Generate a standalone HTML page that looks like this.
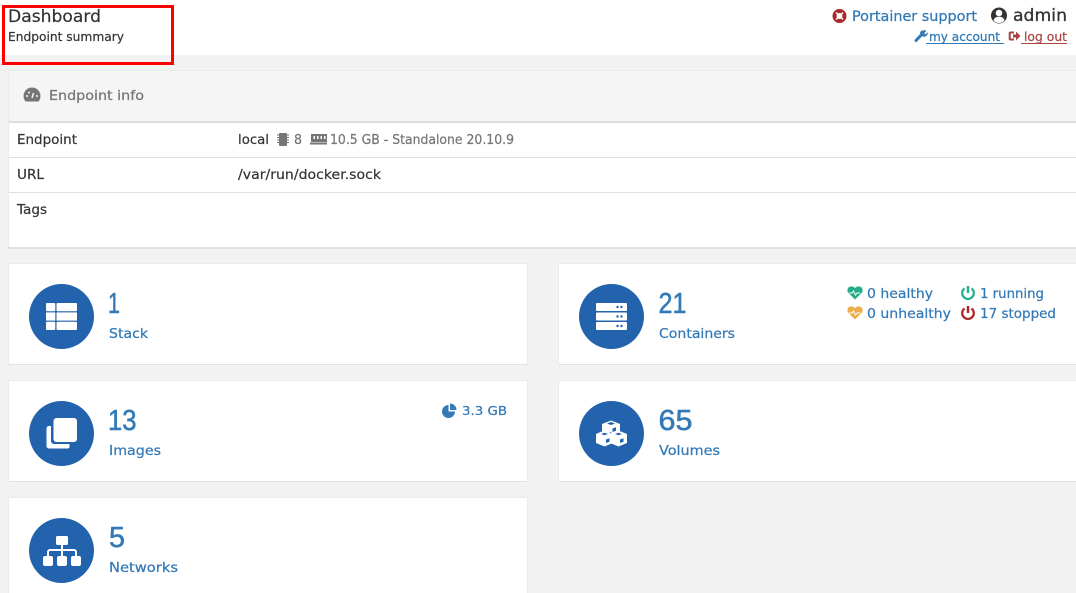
<!DOCTYPE html>
<html><head><meta charset="utf-8"><style>
html,body{margin:0;padding:0;width:1076px;height:593px;overflow:hidden;background:#f2f2f2}
svg{display:block}
text{font-family:"DejaVu Sans","Liberation Sans",sans-serif}
.b{fill:#337ab7;stroke:#337ab7;stroke-width:.25}
.g{fill:#767676;stroke:#767676;stroke-width:.25}
.d{fill:#333;stroke:#333;stroke-width:.2}
.r{fill:#a94442;stroke:#a94442;stroke-width:.2}
text.n{font-family:"Liberation Sans",sans-serif;font-size:29px;stroke-width:.55}
</style></head><body>
<svg width="1076" height="593" viewBox="0 0 1076 593" xmlns="http://www.w3.org/2000/svg">
<rect width="1076" height="55" fill="#fff"/>
<!-- panel -->
<rect x="8" y="70" width="1068" height="179" fill="#ebebeb"/>
<rect x="8" y="247" width="1068" height="2" fill="#e2e2e2"/>
<rect x="9" y="71" width="1067" height="176" fill="#fff"/>
<rect x="9" y="71" width="1067" height="51" fill="#f5f5f5"/>
<rect x="9" y="121" width="1067" height="2" fill="#ddd"/>
<rect x="9" y="157" width="1067" height="1" fill="#e0e0e0"/>
<rect x="9" y="192" width="1067" height="1" fill="#e0e0e0"/>
<!-- red box -->
<rect x="3.500" y="6.500" width="169" height="57" fill="none" stroke="#f00" stroke-width="3"/>
<text class="d" x="8" y="22" font-size="16.500" textLength="93" lengthAdjust="spacingAndGlyphs">Dashboard</text>
<text class="d" x="8" y="41" font-size="12.500" textLength="116" lengthAdjust="spacingAndGlyphs">Endpoint summary</text>
<!-- top right -->
<circle cx="839.500" cy="16" r="5" fill="none" stroke="#a82a2a" stroke-width="4"/>
<path d="M836 12.500l7 7M843 12.500l-7 7" stroke="#fff" stroke-width="1.400"/>
<text class="b" x="852" y="21" font-size="14" textLength="125" lengthAdjust="spacingAndGlyphs">Portainer support</text>
<circle cx="999" cy="15.500" r="8" fill="#333"/>
<circle cx="999" cy="13" r="3.300" fill="#fff"/>
<path d="M993.500 20.500c.8-2.800 2.900-3.700 5.500-3.700s4.700.9 5.500 3.700a7.300 7.300 0 0 1-11 0z" fill="#fff"/>
<text class="d" x="1013" y="21" font-size="16.500" textLength="54" lengthAdjust="spacingAndGlyphs" style="stroke-width:.3">admin</text>
<path d="M916 40.500l6-6.300" stroke="#337ab7" stroke-width="3" stroke-linecap="round"/>
<path d="M926.500 30.800l-2.300 2.300 1.300 1.300 2.300-2.200c.4 2.800-2.200 5.300-5 4.300l-2.600-2.600c-.9-2.900 2.900-4.700 6.300-3.100z" fill="#337ab7"/>
<text class="b" x="929" y="41" font-size="12.500" textLength="71" lengthAdjust="spacingAndGlyphs">my account</text>
<rect x="926" y="43" width="78" height="1" fill="#337ab7"/>
<path d="M1014 32.500h-3.500a.8.800 0 0 0-.8.800v5.400a.8.800 0 0 0 .8.800h3.500" fill="none" stroke="#a94442" stroke-width="2"/>
<path d="M1013 34.500h3v-3l4.500 4.500-4.500 4.500v-3h-3z" fill="#a94442"/>
<text class="r" x="1024" y="41" font-size="12.500" textLength="43" lengthAdjust="spacingAndGlyphs">log out</text>
<rect x="1021" y="43" width="46" height="1" fill="#a94442"/>
<!-- panel heading -->
<path d="M25.500 101.500a8.500 8.500 0 1 1 13 0z" fill="#767676"/>
<path d="M32 98l1.500-5" stroke="#f5f5f5" stroke-width="1.500"/>
<circle cx="27" cy="96" r="1" fill="#f5f5f5"/><circle cx="37" cy="96" r="1" fill="#f5f5f5"/><circle cx="29" cy="92.500" r="1" fill="#f5f5f5"/>
<text class="g" x="49" y="100" font-size="13.500" textLength="95" lengthAdjust="spacingAndGlyphs">Endpoint info</text>
<!-- table -->
<text class="d" x="17" y="144" font-size="13" textLength="60" lengthAdjust="spacingAndGlyphs">Endpoint</text>
<text class="d" x="17" y="179" font-size="13" textLength="27" lengthAdjust="spacingAndGlyphs">URL</text>
<text class="d" x="17" y="214" font-size="13" textLength="30" lengthAdjust="spacingAndGlyphs">Tags</text>
<text class="d" x="238" y="144" font-size="13" textLength="31" lengthAdjust="spacingAndGlyphs">local</text>
<rect x="279" y="133" width="8" height="13" rx="1" fill="#767676"/>
<path d="M277 135h12M277 137.500h12M277 140h12M277 142.500h12" stroke="#767676" stroke-width="1"/>
<text class="g" x="294" y="144" font-size="13" textLength="8" lengthAdjust="spacingAndGlyphs">8</text>
<rect x="311" y="134" width="16" height="8" fill="#767676"/>
<path d="M313.500 136h1.500v3h-1.500zM317 136h1.500v3H317zM320.500 136h1.500v3h-1.500zM324 136h1.500v3H324z" fill="#fff"/>
<rect x="310" y="142.500" width="17" height="2" fill="#767676"/>
<text class="g" x="330" y="144" font-size="13.500" textLength="184" lengthAdjust="spacingAndGlyphs">10.5 GB - Standalone 20.10.9</text>
<text class="d" x="238" y="179" font-size="13" textLength="143" lengthAdjust="spacingAndGlyphs">/var/run/docker.sock</text>
<!-- cards -->
<g fill="#ebebeb">
<rect x="8" y="263" width="520" height="102"/>
<rect x="558" y="263" width="518" height="102"/>
<rect x="8" y="380" width="520" height="102"/>
<rect x="558" y="380" width="518" height="102"/>
<rect x="8" y="497" width="520" height="96"/>
</g>
<g fill="#e2e2e2">
<rect x="8" y="364" width="520" height="1"/>
<rect x="558" y="364" width="518" height="1"/>
<rect x="8" y="481" width="520" height="1"/>
<rect x="558" y="481" width="518" height="1"/>
</g>
<g fill="#fff">
<rect x="9" y="264" width="518" height="100"/>
<rect x="559" y="264" width="517" height="100"/>
<rect x="9" y="381" width="518" height="100"/>
<rect x="559" y="381" width="517" height="100"/>
<rect x="9" y="498" width="518" height="95"/>
</g>
<g fill="#2362ad">
<circle cx="61.500" cy="316.500" r="32.500"/>
<circle cx="611.500" cy="316.500" r="32.500"/>
<circle cx="61.500" cy="433.500" r="32.500"/>
<circle cx="611.500" cy="433.500" r="32.500"/>
<circle cx="61.500" cy="550.500" r="32.500"/>
</g>
<!-- stack icon -->
<g fill="#fff">
<rect x="46" y="303" width="9.300" height="8.300" rx="1"/><rect x="56.500" y="303" width="20.500" height="8.300" rx="1"/>
<rect x="46" y="312.400" width="9.300" height="8.200"/><rect x="56.500" y="312.400" width="20.500" height="8.200"/>
<rect x="46" y="321.700" width="9.300" height="8.300" rx="1"/><rect x="56.500" y="321.700" width="20.500" height="8.300" rx="1"/>
</g>
<!-- containers icon -->
<g fill="#fff">
<rect x="596" y="303" width="31" height="8" rx="1"/>
<rect x="596" y="312.500" width="31" height="8" rx="1"/>
<rect x="596" y="322" width="31" height="8" rx="1"/>
</g>
<g fill="#2362ad">
<circle cx="617.500" cy="307" r="1.200"/><circle cx="621.500" cy="307" r="1.200"/>
<circle cx="617.500" cy="316.500" r="1.200"/><circle cx="621.500" cy="316.500" r="1.200"/>
<circle cx="617.500" cy="326" r="1.200"/><circle cx="621.500" cy="326" r="1.200"/>
</g>
<!-- images icon -->
<path d="M49 426h2v15a3 3 0 0 0 3 3h15.500v2.500a2 2 0 0 1-2 2H49a2.500 2.500 0 0 1-2.500-2.500V428.500A2.500 2.500 0 0 1 49 426z" fill="#fff"/>
<rect x="53.500" y="418" width="23.500" height="24" rx="3" fill="#fff"/>
<!-- volumes icon -->
<g>
<path d="M611 420.500l9 3.500v9l-9 3.500-9-3.500v-9z" fill="#fff"/>
<path d="M607 423.500l4-1.500 4 1.500-4 1.500z" fill="#2362ad"/>
<path d="M612.500 428.500l3.500-1.300v3.500l-3.500 1.300z" fill="#2362ad"/>
<path d="M604 430.500l9 3.500v9l-8.500 3.500-8.500-3.500v-9z" fill="#fff"/>
<path d="M618.500 430.500l8.500 3.500v9l-8.500 3.500-8.500-3.500v-9z" fill="#fff"/>
<path d="M601 434l3.500-1.300 3.500 1.300-3.500 1.300zM615 434l3.500-1.300 3.500 1.300-3.500 1.300z" fill="#2362ad"/>
<path d="M606 439.500l3.500-1.300v3.500l-3.500 1.300zM620 439.500l3.500-1.300v3.500l-3.500 1.300z" fill="#2362ad"/>
<path d="M611 433.500v-1l-1-.4" stroke="#2362ad" stroke-width=".8" fill="none"/>
</g>
<!-- networks icon -->
<g fill="#fff">
<rect x="56" y="536" width="12" height="9" rx="1.500"/>
<rect x="43" y="556" width="10" height="10" rx="2"/>
<rect x="57" y="556" width="10" height="10" rx="2"/>
<rect x="71" y="556" width="10" height="10" rx="2"/>
</g>
<path d="M62 545v11M48 556v-4a2 2 0 0 1 2-2h24a2 2 0 0 1 2 2v4" fill="none" stroke="#fff" stroke-width="2"/>
<!-- card text -->
<text class="b n" x="108" y="313" textLength="12" lengthAdjust="spacingAndGlyphs">1</text>
<text class="b" x="109" y="338" font-size="13.500" textLength="39" lengthAdjust="spacingAndGlyphs">Stack</text>
<text class="b n" x="658.500" y="313" textLength="28" lengthAdjust="spacingAndGlyphs">21</text>
<text class="b" x="659" y="338" font-size="13.500" textLength="76" lengthAdjust="spacingAndGlyphs">Containers</text>
<text class="b n" x="108" y="430" textLength="28.500" lengthAdjust="spacingAndGlyphs">13</text>
<text class="b" x="109" y="455" font-size="13.500" textLength="52" lengthAdjust="spacingAndGlyphs">Images</text>
<text class="b n" x="658.500" y="430" textLength="34" lengthAdjust="spacingAndGlyphs">65</text>
<text class="b" x="659" y="455" font-size="13.500" textLength="61" lengthAdjust="spacingAndGlyphs">Volumes</text>
<text class="b n" x="109" y="547" textLength="16" lengthAdjust="spacingAndGlyphs">5</text>
<text class="b" x="109" y="572" font-size="13.500" textLength="69" lengthAdjust="spacingAndGlyphs">Networks</text>
<!-- status -->
<path d="M855 299.500l-6.500-6.500a3.800 3.800 0 0 1 0-5.500c1.800-1.600 4.800-1.500 6.500.8 1.700-2.300 4.700-2.400 6.500-.8a3.800 3.800 0 0 1 0 5.500z" fill="#23ae89"/>
<path d="M849 293h3l1.500-2 2 4 1.500-2h3" fill="none" stroke="#fff" stroke-width="1"/>
<text class="b" x="867" y="298" font-size="13.500" textLength="66" lengthAdjust="spacingAndGlyphs">0 healthy</text>
<path d="M855 319.500l-6.500-6.500a3.800 3.800 0 0 1 0-5.500c1.800-1.600 4.800-1.500 6.500.8 1.700-2.300 4.700-2.400 6.500-.8a3.800 3.800 0 0 1 0 5.500z" fill="#f0ad4e"/>
<path d="M849 313h3l1.500-2 2 4 1.500-2h3" fill="none" stroke="#fff" stroke-width="1"/>
<text class="b" x="867" y="318" font-size="13.500" textLength="84" lengthAdjust="spacingAndGlyphs">0 unhealthy</text>
<path d="M964.500 288.500a5.800 5.800 0 1 0 7 0" fill="none" stroke="#23ae89" stroke-width="2.200"/>
<path d="M968 286v7" stroke="#23ae89" stroke-width="2.400"/>
<text class="b" x="980" y="298" font-size="13.500" textLength="64" lengthAdjust="spacingAndGlyphs">1 running</text>
<path d="M964.500 308.500a5.800 5.800 0 1 0 7 0" fill="none" stroke="#ae2323" stroke-width="2.200"/>
<path d="M968 306v7" stroke="#ae2323" stroke-width="2.400"/>
<text class="b" x="980" y="318" font-size="13.500" textLength="76" lengthAdjust="spacingAndGlyphs">17 stopped</text>
<!-- pie -->
<path d="M448.500 404v6.500h6.500a6.500 6.500 0 1 1-6.500-6.500z" fill="#337ab7" transform="translate(0 1)"/>
<path d="M450 403.500a6.500 6.500 0 0 1 6.500 6.500H450z" fill="#337ab7"/>
<text class="b" x="462" y="415" font-size="12.500" textLength="45" lengthAdjust="spacingAndGlyphs">3.3 GB</text>
</svg>
</body></html>
